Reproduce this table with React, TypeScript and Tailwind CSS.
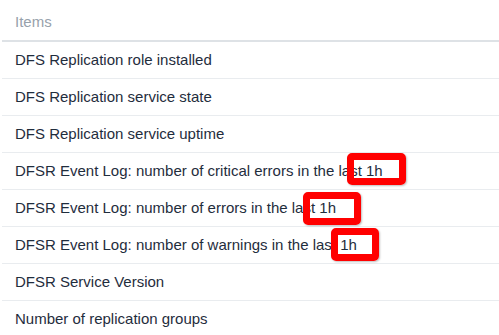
import React from "react";

const items = [
  { text: "DFS Replication role installed" },
  { text: "DFS Replication service state" },
  { text: "DFS Replication service uptime" },
  { text: "DFSR Event Log: number of critical errors in the last 1h", mark: "left-[345px] top-0 w-[59px] h-[32px]" },
  { text: "DFSR Event Log: number of errors in the last 1h", mark: "left-[301px] top-[2px] w-[58px] h-[33px]" },
  { text: "DFSR Event Log: number of warnings in the last 1h", mark: "left-[329px] top-[1px] w-[48px] h-[33px]" },
  { text: "DFSR Service Version" },
  { text: "Number of replication groups" },
];

export default function App() {
  return (
    <div className="w-[499px] h-[335px] overflow-hidden bg-white pl-[2px] font-['Liberation_Sans',Arial,sans-serif] text-[15px]">
      <div className="h-[42px] flex items-center px-[13px] pt-[4px] border-b-2 border-[#dee2e6] text-[#97a1ab]">
        Items
      </div>
      {items.map((it, i) => (
        <div
          key={i}
          className="relative h-[37px] flex items-center px-[13px] pt-[1px] border-b border-[#e9ecef] text-[#1f2d3d]"
        >
          {it.text}
          {it.mark && (
            <div className={`absolute ${it.mark} border-[7px] border-[#ff0000] rounded-[5px] shadow-[1px_1px_2px_rgba(0,0,0,0.25)]`} />
          )}
        </div>
      ))}
    </div>
  );
}
